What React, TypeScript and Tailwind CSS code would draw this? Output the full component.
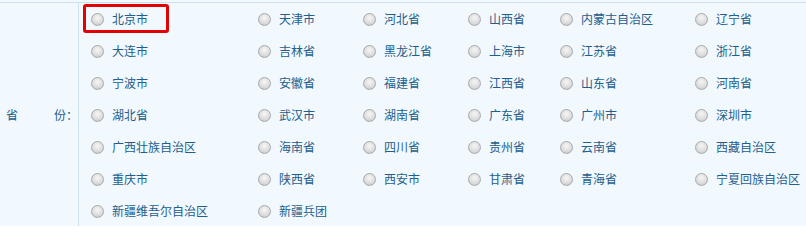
import * as React from 'react';

const provinces = [
  '北京市', '天津市', '河北省', '山西省', '内蒙古自治区', '辽宁省',
  '大连市', '吉林省', '黑龙江省', '上海市', '江苏省', '浙江省',
  '宁波市', '安徽省', '福建省', '江西省', '山东省', '河南省',
  '湖北省', '武汉市', '湖南省', '广东省', '广州市', '深圳市',
  '广西壮族自治区', '海南省', '四川省', '贵州省', '云南省', '西藏自治区',
  '重庆市', '陕西省', '西安市', '甘肃省', '青海省', '宁夏回族自治区',
  '新疆维吾尔自治区', '新疆兵团',
];

function Radio() {
  return (
    <span className="h-[13px] w-[13px] shrink-0 rounded-full border border-[#a9a9a9] bg-[radial-gradient(circle_at_50%_35%,#f6f6f6_0%,#dedede_55%,#c4c4c4_100%)]" />
  );
}

export default function App() {
  const [selected, setSelected] = React.useState<string | null>(null);

  return (
    <div
      className="h-[226px] w-[806px] bg-[#f1f9fe] pt-[2px] text-[12px] text-[#235d8c]"
      style={{ fontFamily: '"Noto Sans CJK SC", "Noto Sans", sans-serif' }}
    >
      <div className="flex border-t border-[#cbe2ee]">
        <div className="flex w-[79px] shrink-0 items-center justify-between border-r border-[#cbe2ee] pl-[6px]">
          <span>省</span>
          <span>份：</span>
        </div>

        <div className="grid grid-cols-[167px_105px_105px_92px_135px_1fr] pl-[12px]">
          {provinces.map((p, i) => (
            <label
              key={p}
              className="relative flex h-[32px] cursor-pointer items-center gap-[8px] whitespace-nowrap"
              onClick={() => setSelected(p)}
            >
              {i === 0 && (
                <span className="pointer-events-none absolute left-[-8px] top-[1px] h-[29px] w-[86px] rounded-[3px] border-[3px] border-[#e30000]" />
              )}
              <Radio />
              <span className={selected === p ? 'font-semibold' : ''}>{p}</span>
            </label>
          ))}
        </div>
      </div>
    </div>
  );
}
